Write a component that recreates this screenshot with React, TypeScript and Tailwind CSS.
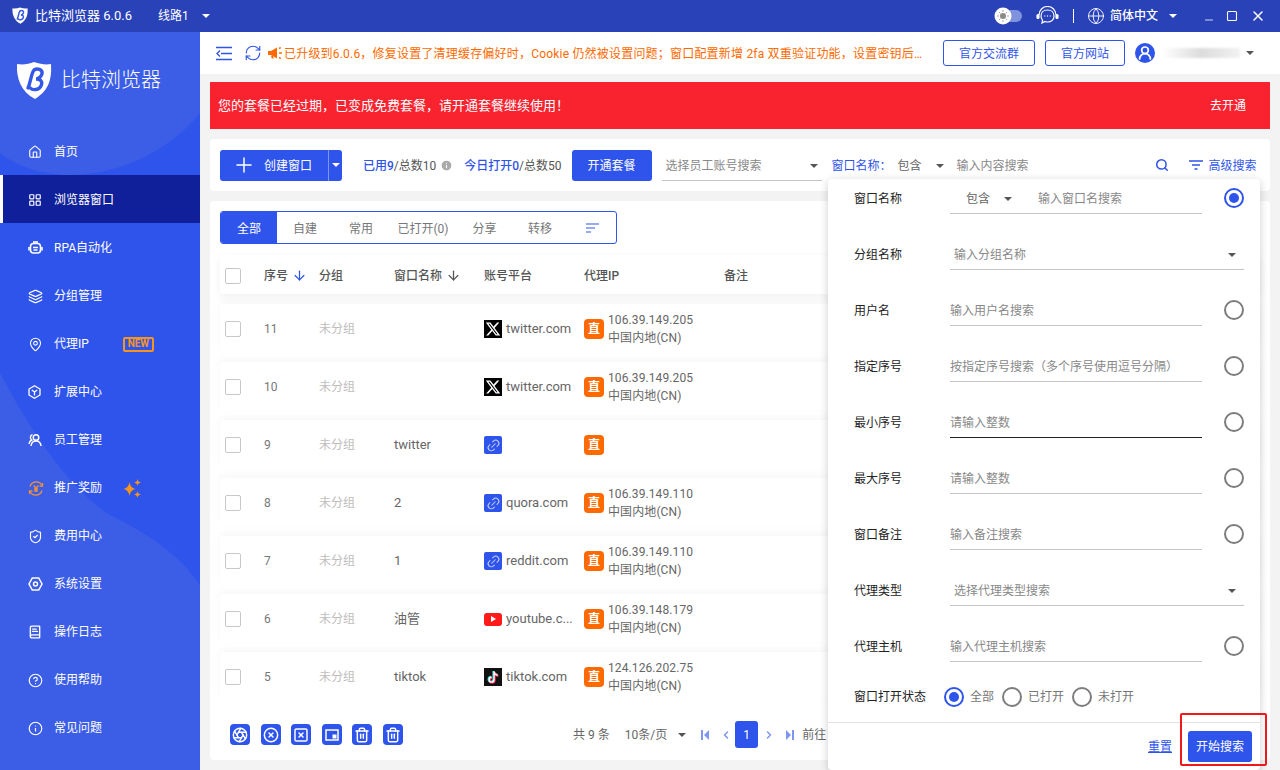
import { Home, LayoutGrid, Layers, MapPin, ShieldCheck, BookText, CircleHelp, Info, Plus, Search, Globe, Minus, Square, X, RefreshCw, ArrowDown, Link2, Aperture, CircleX, SquareX, Trash2, ChevronLeft, ChevronRight, UserRound } from 'lucide-react'
import type { ReactNode } from 'react'

function Caret({ className = 'border-t-white' }: { className?: string }) {
  return <span className={`inline-block w-0 h-0 border-x-[4px] border-x-transparent border-t-[4px] ${className}`} />
}

function Logo({ size }: { size: number }) {
  return (
    <svg width={size} height={size * 1.08} viewBox="0 0 36 39">
      <path d="M18 1 C24 3 30 4 35 3 C36 16 34 29 19 38 C5 31 0 17 1 3 C7 4 13 3 18 1 Z" fill="#fff" />
      <path d="M12 27 C15 20 15 13 18 9 C21 7 27 8 26 13 C25 16 22 18 20 18 C25 18 27 21 25 25 C23 29 17 30 14 27" fill="none" stroke="#3358e8" strokeWidth="3.4" strokeLinecap="round" />
    </svg>
  )
}

function BotIcon() {
  return (
    <svg width="15" height="14" viewBox="0 0 15 14" fill="none" stroke="#fff" strokeWidth="1.6">
      <rect x="2.5" y="2.500" width="10" height="9.500" rx="3" />
      <path d="M1 6v3.500M14 6v3.500M5 6.500h5M5.500 9h4" />
      <path d="M5 1h5" />
    </svg>
  )
}

function CoinIcon() {
  return (
    <svg width="16" height="15" viewBox="0 0 16 15" fill="none" stroke="#f0913a" strokeWidth="1.300">
      <path d="M2 5.500A6.500 6.500 0 0 1 14 4.500M14 9.500A6.500 6.500 0 0 1 2 10.500" />
      <path d="M14.500 2v3h-3M1.500 13v-3h3" />
      <path d="M5.800 4.500 8 7.500l2.200-3M8 7.500v3.500M6 8h4M6 9.800h4" />
    </svg>
  )
}

function StaffIcon() {
  return (
    <svg width="14" height="14" viewBox="0 0 14 14" fill="none" stroke="#fff" strokeWidth="1.400">
      <circle cx="8" cy="4.500" r="2.800" />
      <path d="M3 13c.3-3 2-5 5-5s4.700 2 5 5M4.500 1.600A3 3 0 0 0 3.800 7C2 7.800 1.200 9.300 1 11" />
    </svg>
  )
}

function NutIcon() {
  return (
    <svg width="15" height="14" viewBox="0 0 15 14" fill="none" stroke="#fff" strokeWidth="1.500">
      <path d="M4.300 1h6.400l3.300 6-3.300 6H4.300L1 7z" />
      <circle cx="7.500" cy="7" r="2" />
    </svg>
  )
}

function HexYIcon() {
  return (
    <svg width="13" height="14" viewBox="0 0 13 14" fill="none" stroke="#fff" strokeWidth="1.300">
      <path d="M6.500.8 12 4v6l-5.500 3.200L1 10V4z" />
      <path d="M3.800 5 6.500 7l2.700-2M6.500 7v3.500" />
    </svg>
  )
}

const menu: { label: ReactNode; icon: ReactNode; active?: boolean; extra?: ReactNode }[] = [
  { label: '首页', icon: <Home size={14} strokeWidth={1.9} /> },
  { label: '浏览器窗口', icon: <LayoutGrid size={14} strokeWidth={2} />, active: true },
  { label: 'RPA自动化', icon: <BotIcon /> },
  { label: '分组管理', icon: <Layers size={15} strokeWidth={1.9} /> },
  {
    label: '代理IP',
    icon: <MapPin size={15} strokeWidth={1.7} />,
    extra: (
      <span className="ml-[34px] w-[31px] h-[15px] rounded-[2px] border-2 border-[#f7941d] flex items-center justify-center text-[10px] font-bold text-[#f7941d] leading-none">
        NEW
      </span>
    ),
  },
  { label: '扩展中心', icon: <HexYIcon /> },
  { label: '员工管理', icon: <StaffIcon /> },
  {
    label: '推广奖励',
    icon: <CoinIcon />,
    extra: (
      <svg className="ml-[21px]" width="19" height="19" viewBox="0 0 19 19" fill="#f7941d">
        <path d="M6.500 3c.7 4 2.500 6.300 6.500 7-4 .7-5.800 3-6.500 7-.7-4-2.500-6.300-6.500-7 4-.7 5.800-3 6.500-7z" />
        <path d="M14.500 0c.4 2.200 1.300 3.100 3.500 3.500-2.200.4-3.100 1.300-3.500 3.500-.4-2.200-1.300-3.100-3.500-3.500 2.200-.4 3.100-1.300 3.500-3.500z" />
        <path d="M14.500 12c.4 2.200 1.300 3.100 3.500 3.500-2.200.4-3.100 1.300-3.500 3.500-.4-2.200-1.300-3.100-3.500-3.500 2.200-.4 3.100-1.300 3.500-3.500z" />
      </svg>
    ),
  },
  { label: '费用中心', icon: <ShieldCheck size={15} strokeWidth={1.8} /> },
  { label: '系统设置', icon: <NutIcon /> },
  { label: '操作日志', icon: <BookText size={14} strokeWidth={2.4} /> },
  { label: '使用帮助', icon: <CircleHelp size={15} strokeWidth={1.9} /> },
  { label: '常见问题', icon: <Info size={15} strokeWidth={1.9} /> },
]

function Sidebar() {
  return (
    <aside className="relative w-[200px] h-[738px] shrink-0 bg-[#2f54eb] text-white overflow-hidden">
      <svg className="absolute inset-0" width="200" height="738" viewBox="0 32 200 738">
        <path d="M0 32H200V113C170 150 120 175 70 175C40 175 15 165 0 153Z" fill="#3c5ee6" />
        <path d="M0 373C30 430 70 490 110 515C150 535 180 555 200 585V770H0Z" fill="#3c5ee6" />
      </svg>
      <div className="relative">
        <div className="h-[95px] flex items-center pl-[16px] pt-[1px] gap-[9px]">
          <Logo size={36} />
          <span className="text-[20px] leading-none font-light">比特浏览器</span>
        </div>
        {menu.map((m, i) => (
          <div key={i} className={`relative h-[48px] flex items-center pt-[2px] pl-[28px] text-[12px] ${m.active ? 'bg-[#0f209a] border-l-[3px] border-white !pl-[25px]' : ''}`}>
            <span className="w-[26px] flex items-center">{m.icon}</span>
            <span>{m.label}</span>
            {m.extra}
          </div>
        ))}
      </div>
    </aside>
  )
}

function TitleBar() {
  return (
    <header className="h-[32px] bg-[#2942b8] text-white flex items-center text-[12px]">
      <span className="ml-[12px] mr-[7px] flex"><Logo size={16} /></span>
      <span className="text-[13px] w-[123px]">比特浏览器 6.0.6</span>
      <span>线路1</span>
      <span className="ml-[13px] flex"><Caret /></span>
      <div className="ml-auto flex items-center">
        <svg width="28" height="18" viewBox="0 0 28 18">
          <rect x="10" y="3" width="18" height="12" rx="6" fill="#7f92dd" />
          <circle cx="9" cy="9" r="8.500" fill="#fff" />
          <circle cx="9" cy="9" r="3" fill="#8a8a8a" />
          <path d="M9 3v2M9 13v2M3 9h2M13 9h2M5 5l1.500 1.500M13 5l-1.500 1.500M5 13l1.500-1.500M13 13l-1.500-1.500" stroke="#aaa" strokeWidth="1" />
        </svg>
        <svg className="ml-[14px]" width="23" height="20" viewBox="0 0 23 20" fill="none" stroke="#fff" strokeWidth="1.200">
          <path d="M3 9a8.500 8.500 0 0 1 17 0" />
          <path d="M11.500 4c4 0 6.500 2.500 6.500 6s-2.500 6-6.500 6c-1 0-2-.2-2.800-.5L6 17l.5-2.800C5.600 13 5 11.600 5 10c0-3.500 2.500-6 6.500-6z" />
          <rect x="1" y="8.500" width="2" height="4" rx="1" fill="#fff" />
          <rect x="20" y="8.500" width="2" height="4" rx="1" fill="#fff" />
          <path d="M8.500 10h.8M11.100 10h.8M13.700 10h.8" strokeWidth="1.600" />
        </svg>
        <span className="ml-[14px] w-px h-[14px] bg-white" />
        <Globe className="ml-[13px]" size={18} strokeWidth={1.200} />
        <span className="ml-[5px] font-medium">简体中文</span>
        <span className="ml-[11px] flex"><Caret /></span>
        <Minus className="ml-[26px] mt-[8px]" size={12} strokeWidth={1.600} />
        <Square className="ml-[11px]" size={12} strokeWidth={2.200} />
        <X className="ml-[12px] mr-[14px]" size={16} strokeWidth={2.200} />
      </div>
    </header>
  )
}

function TopBar() {
  return (
    <div className="h-[42px] bg-white flex items-center text-[12px] shrink-0">
      <svg className="ml-[16px]" width="16" height="15" viewBox="0 0 16 15" fill="none" stroke="#2f54eb" strokeWidth="1.300">
        <path d="M0 1.500h16M5 7.500h11M0 13.500h16" />
        <path d="M4 4.500 1 7.500l3 3" />
      </svg>
      <RefreshCw className="ml-[12px] text-[#2f54eb]" size={18} strokeWidth={1.500} />
      <svg className="ml-[6px]" width="14" height="12" viewBox="0 0 14 12" fill="#ff6a00">
        <path d="M0 4h3l6-3.500v11L3 8H0z" />
        <path d="M3 8.500h2l.8 3H3.800z" />
        <path d="M11 1.500 12.800.6M11 6h3M11 10.500l1.800.9" stroke="#ff6a00" strokeWidth="1.500" />
      </svg>
      <span className="ml-[2px] pt-[2px] w-[640px] truncate tracking-[0.2px] text-[#ff6a00]">已升级到6.0.6，修复设置了清理缓存偏好时，Cookie 仍然被设置问题；窗口配置新增 2fa 双重验证功能，设置密钥后...</span>
      <button className="ml-[19px] pt-[2px] w-[92px] h-[26px] rounded-[3px] border border-[#2f54eb] text-[#2f54eb]">官方交流群</button>
      <button className="ml-[10px] pt-[2px] w-[80px] h-[26px] rounded-[3px] border border-[#2f54eb] text-[#2f54eb]">官方网站</button>
      <span className="ml-[10px] w-[20px] h-[20px] rounded-full bg-[#2f54eb] flex items-center justify-center text-white overflow-hidden">
        <UserRound size={16} strokeWidth={2.600} />
      </span>
      <span className="ml-[7px] w-[78px] h-[10px] bg-gradient-to-r from-[#ffffff] via-[#dcdcdc] to-[#f2f2f2] blur-[1px]" />
      <span className="ml-[6px] flex"><Caret className="border-t-[#555]" /></span>
    </div>
  )
}

function Toolbar() {
  return (
    <div className="mt-[10px] mr-[10px] h-[52px] bg-white rounded-[4px] flex items-center pl-[10px] text-[12px] shrink-0 [&>span]:pt-[2px]">
      <div className="h-[31px] w-[122px] bg-[#2f54eb] rounded-[3px] flex items-center text-white">
        <Plus className="ml-[12px] shrink-0" size={24} strokeWidth={1.500} />
        <span className="ml-[8px] pt-[2px] whitespace-nowrap">创建窗口</span>
        <span className="ml-[16px] h-full w-[14px] border-l border-[#7f95f2] flex items-center justify-center"><Caret /></span>
      </div>
      <span className="ml-[21px] text-[#555] whitespace-nowrap"><span className="text-[#2f54eb] font-medium">已用9</span>/总数10</span>
      <Info className="ml-[4px] fill-[#aaa] text-white" size={13} />
      <span className="ml-[11px] text-[#555] whitespace-nowrap"><span className="text-[#2f54eb] font-medium">今日打开0</span>/总数50</span>
      <button className="ml-[10px] pt-[2px] w-[80px] h-[31px] bg-[#2f54eb] rounded-[3px] text-white">开通套餐</button>
      <div className="ml-[10px] w-[160px] h-[32px] border-b border-[#c4c4c4] flex items-center justify-between pt-[2px] pl-[4px] pr-[4px] text-[#888]">
        选择员工账号搜索
        <Caret className="border-t-[#555]" />
      </div>
      <span className="ml-[10px] text-[#2f54eb]">窗口名称：</span>
      <span className="ml-[6px] text-[#666]">包含</span>
      <span className="ml-[14px] flex"><Caret className="border-t-[#555]" /></span>
      <span className="ml-[13px] w-[198px] text-[#888]">输入内容搜索</span>
      <Search className="text-[#2f54eb]" size={14} strokeWidth={2.600} />
      <svg className="ml-[20px]" width="14" height="10" viewBox="0 0 14 10" stroke="#2f54eb" strokeWidth="1.300">
        <path d="M0 1h14M3 5h8M5.500 9h3" />
      </svg>
      <span className="ml-[6px] text-[#2f54eb]">高级搜索</span>
    </div>
  )
}

function Tabs() {
  const tabs: [string, string][] = [['自建', 'w-[56px]'], ['常用', 'w-[56px]'], ['已打开(0)', 'w-[68px]'], ['分享', 'w-[55px]'], ['转移', 'w-[56px]']]
  return (
    <div className="ml-[10px] w-[397px] h-[33px] rounded-[3px] border border-[#2f54eb] flex text-[12px] text-[#777] overflow-hidden">
      <span className="w-[56px] pt-[2px] bg-[#2f54eb] text-white flex items-center justify-center">全部</span>
      {tabs.map(([t, w]) => (
        <span key={t} className={`${w} pt-[2px] flex items-center justify-center`}>{t}</span>
      ))}
      <span className="w-[48px] flex items-center justify-center">
        <svg width="13" height="10" viewBox="0 0 13 10" stroke="#2f54eb" strokeWidth="1.200">
          <path d="M0 1h13M0 5h9M0 9h5" />
        </svg>
      </span>
    </div>
  )
}

const cols = 'grid grid-cols-[39px_55px_75px_90px_100px_140px_1fr] items-center'

function Check() {
  return <span className="block w-[16px] h-[16px] rounded-[2px] border border-[#c8c8c8] bg-white" />
}

function Platform({ kind }: { kind: string }) {
  if (kind === 'x')
    return (
      <span className="w-[18px] h-[18px] bg-black flex items-center justify-center">
        <svg width="16" height="16" viewBox="0 0 24 24" fill="#fff"><path d="M18.200 2.200h3.300l-7.200 8.300 8.500 11.300h-6.700l-5.200-6.800-6 6.800H1.700l7.700-8.800L1.300 2.200h6.800l4.700 6.200zm-1.200 17.600h1.800L7.100 4.100H5.100z" /></svg>
      </span>
    )
  if (kind === 'yt')
    return (
      <span className="w-[18px] h-[13px] rounded-[3px] bg-[#ff1a1a] flex items-center justify-center">
        <span className="w-0 h-0 border-y-[3px] border-y-transparent border-l-[5px] border-l-white" />
      </span>
    )
  if (kind === 'tt')
    return (
      <span className="w-[18px] h-[18px] bg-[#111] flex items-center justify-center">
        <svg width="13" height="14" viewBox="0 0 24 26" fill="none" strokeWidth="4">
          <path d="M13 3v15a4.500 4.500 0 1 1-4.500-4.500M13 3c.5 4 3.500 6.500 7 6.500" stroke="#25f4ee" transform="translate(-1 -1)" />
          <path d="M13 3v15a4.500 4.500 0 1 1-4.500-4.500M13 3c.5 4 3.500 6.500 7 6.500" stroke="#fe2c55" transform="translate(1 1)" />
          <path d="M13 3v15a4.500 4.500 0 1 1-4.500-4.500M13 3c.5 4 3.500 6.500 7 6.500" stroke="#fff" strokeWidth="2.500" />
        </svg>
      </span>
    )
  return (
    <span className="w-[18px] h-[18px] rounded-[2px] bg-[#2f54eb] flex items-center justify-center text-[#c8d3fb]">
      <Link2 className="-rotate-45" size={15} strokeWidth={1.600} />
    </span>
  )
}

const rows = [
  { no: 11, name: '', kind: 'x', site: 'twitter.com', ip: '106.39.149.205' },
  { no: 10, name: '', kind: 'x', site: 'twitter.com', ip: '106.39.149.205' },
  { no: 9, name: 'twitter', kind: 'link', site: '', ip: '' },
  { no: 8, name: '2', kind: 'link', site: 'quora.com', ip: '106.39.149.110' },
  { no: 7, name: '1', kind: 'link', site: 'reddit.com', ip: '106.39.149.110' },
  { no: 6, name: '油管', kind: 'yt', site: 'youtube.c...', ip: '106.39.148.179' },
  { no: 5, name: 'tiktok', kind: 'tt', site: 'tiktok.com', ip: '124.126.202.75' },
]

function PagerEnd({ flip }: { flip?: boolean }) {
  return (
    <svg className={flip ? '-scale-x-100' : ''} width="9" height="10" viewBox="0 0 9 10" fill="#7f95f2">
      <rect x="0" y="0" width="2" height="10" />
      <path d="M8 0v10L3 5z" />
    </svg>
  )
}

function Table() {
  return (
    <div className="mt-[10px] mr-[10px] h-[559px] bg-white rounded-[4px] pt-[10px] relative flex flex-col shrink-0">
      <Tabs />
      <div className={`${cols} mt-[11px] ml-[10px] mr-[10px] h-[39px] pt-[2px] pl-[5px] rounded-[4px] bg-white shadow-[0_3px_8px_rgba(0,0,0,0.06)] text-[12px] font-medium text-[#555]`}>
        <Check />
        <span className="flex items-center">序号<ArrowDown className="ml-[4px] text-[#2f54eb]" size={15} /></span>
        <span>分组</span>
        <span className="flex items-center">窗口名称<ArrowDown className="ml-[4px]" size={15} /></span>
        <span>账号平台</span>
        <span>代理IP</span>
        <span>备注</span>
      </div>
      <div className="mt-[10px] mx-[10px] flex flex-col gap-[10px]">
        {rows.map((r) => (
          <div key={r.no} className={`${cols} h-[48px] pt-[2px] pl-[5px] bg-white rounded-[4px] shadow-[0_-3px_8px_rgba(0,0,0,0.035)] text-[13px] text-[#666]`}>
            <Check />
            <span className="text-[12px] text-[#777]">{r.no}</span>
            <span className="text-[12px] text-[#c0bcbc]">未分组</span>
            <span className="text-[#666]">{r.name}</span>
            <span className="flex items-center gap-[4px]">
              <Platform kind={r.kind} />
              {r.site}
            </span>
            <span className="flex items-center gap-[4px] text-[12px] leading-[18px]">
              <span className="w-[20px] h-[20px] rounded-[4px] bg-[#ff6a00] text-white text-[12px] font-bold flex items-center justify-center">直</span>
              {r.ip && (
                <span className="whitespace-nowrap tracking-[0.1px]">
                  {r.ip}
                  <br />
                  中国内地(CN)
                </span>
              )}
            </span>
            <span />
          </div>
        ))}
      </div>
      <div className="mt-[21px] ml-[20px] flex items-center text-[12px] text-[#666]">
        {[Aperture, CircleX, SquareX, 'pip', Trash2, Trash2].map((I, i) => (
          <span key={i} className="mr-[10.500px] w-[20px] h-[21px] rounded-[4px] bg-[#2f54eb] text-white flex items-center justify-center">
            {I === 'pip' ? (
              <svg width="14" height="12" viewBox="0 0 14 12" fill="none" stroke="#fff" strokeWidth="1.500">
                <rect x="1" y="1" width="12" height="10" />
                <rect x="7.500" y="5.500" width="4" height="4" fill="#fff" stroke="none" />
              </svg>
            ) : (
              <I size={16} strokeWidth={2.200} />
            )}
          </span>
        ))}
        <span className="ml-[160px]">共 9 条</span>
        <span className="ml-[15px]">10条/页</span>
        <span className="ml-[11px] flex"><Caret className="border-t-[#555]" /></span>
        <span className="ml-[15px] flex"><PagerEnd /></span>
        <ChevronLeft className="ml-[10px] text-[#7f95f2]" size={12} strokeWidth={3} />
        <span className="ml-[3px] w-[23px] h-[27px] rounded-[3px] bg-[#2f54eb] text-white flex items-center justify-center">1</span>
        <ChevronRight className="ml-[5px] text-[#7f95f2]" size={12} strokeWidth={3} />
        <span className="ml-[10px] flex"><PagerEnd flip /></span>
        <span className="ml-[8px] whitespace-nowrap">前往</span>
      </div>
    </div>
  )
}

function Radio({ on }: { on?: boolean }) {
  return (
    <span className={`w-[20px] h-[20px] rounded-full border-2 flex items-center justify-center shrink-0 ${on ? 'border-[#2f54eb]' : 'border-[#7d7d7d]'}`}>
      {on && <span className="w-[10px] h-[10px] rounded-full bg-[#2f54eb]" />}
    </span>
  )
}

const fields = [
  { label: '分组名称', ph: '输入分组名称', select: true },
  { label: '用户名', ph: '输入用户名搜索' },
  { label: '指定序号', ph: '按指定序号搜索（多个序号使用逗号分隔）' },
  { label: '最小序号', ph: '请输入整数', focus: true },
  { label: '最大序号', ph: '请输入整数' },
  { label: '窗口备注', ph: '输入备注搜索' },
  { label: '代理类型', ph: '选择代理类型搜索', select: true },
  { label: '代理主机', ph: '输入代理主机搜索' },
]

function SearchPanel() {
  return (
    <div className="absolute left-[828px] top-[179px] w-[432px] h-[591px] bg-white rounded-[4px] shadow-[0_2px_8px_rgba(0,0,0,0.2)] flex flex-col pt-[1px] text-[12px]">
      <div className="flex flex-col gap-[22px] pl-[26px]">
        <div className="flex h-[34px]">
          <span className="w-[96px] leading-[38px] text-[#222]">窗口名称</span>
          <div className="w-[252px] border-b border-[#c4c4c4] flex items-center pt-[5px] text-[#888]">
            <span className="ml-[16px] text-[#666]">包含</span>
            <span className="ml-[14px] flex"><Caret className="border-t-[#555]" /></span>
            <span className="ml-[26px]">输入窗口名搜索</span>
          </div>
          <span className="ml-[22px] mt-[8px]"><Radio on /></span>
        </div>
        {fields.map((f) => (
          <div key={f.label} className="flex h-[34px]">
            <span className="w-[96px] leading-[38px] text-[#222]">{f.label}</span>
            {f.select ? (
              <div className="w-[294px] border-b border-[#c4c4c4] flex items-center justify-between pt-[5px] pl-[4px] pr-[8px] text-[#888]">
                {f.ph}
                <Caret className="border-t-[#555]" />
              </div>
            ) : (
              <>
                <div className={`w-[252px] border-b flex items-center pt-[5px] text-[#888] ${f.focus ? 'border-[#222]' : 'border-[#c4c4c4]'}`}>{f.ph}</div>
                <span className="ml-[22px] mt-[8px]"><Radio /></span>
              </>
            )}
          </div>
        ))}
      </div>
      <div className="mt-[17px] h-[36px] pl-[26px] flex items-center text-[#222]">
        <span className="w-[90px]">窗口打开状态</span>
        <Radio on />
        <span className="ml-[6px] text-[#777]">全部</span>
        <span className="ml-[8px]"><Radio /></span>
        <span className="ml-[6px] text-[#777]">已打开</span>
        <span className="ml-[8px]"><Radio /></span>
        <span className="ml-[6px] text-[#777]">未打开</span>
      </div>
      <div className="mt-[7px] border-t border-[#e2e2e2] flex items-center justify-end pt-[8px] pr-[8px]">
        <span className="text-[#2f54eb] underline mr-[16px]">重置</span>
        <button className="w-[64px] h-[31px] rounded-[3px] bg-[#2f54eb] text-white">开始搜索</button>
      </div>
    </div>
  )
}

export default function App() {
  return (
    <div className="relative w-[1280px] h-[770px] overflow-hidden bg-[#f3f3f3] font-[Roboto,'Noto_Sans_CJK_SC',sans-serif]">
      <TitleBar />
      <div className="flex">
        <Sidebar />
        <main className="flex-1 min-w-0 flex flex-col">
          <TopBar />
          <div className="pl-[10px] flex flex-col">
            <div className="mt-[8px] mr-[10px] h-[47px] bg-[#f9222f] text-white flex items-center justify-between pl-[8px] pr-[24px] shrink-0">
              <span className="text-[13px]">您的套餐已经过期，已变成免费套餐，请开通套餐继续使用！</span>
              <span className="text-[12px]">去开通</span>
            </div>
            <Toolbar />
            <Table />
          </div>
        </main>
      </div>
      <SearchPanel />
      {/* red marker around the search button */}
      <div className="absolute left-[1180px] top-[713px] w-[87px] h-[53px] border-2 border-[#f01818] rounded-[2px]" />
    </div>
  )
}
